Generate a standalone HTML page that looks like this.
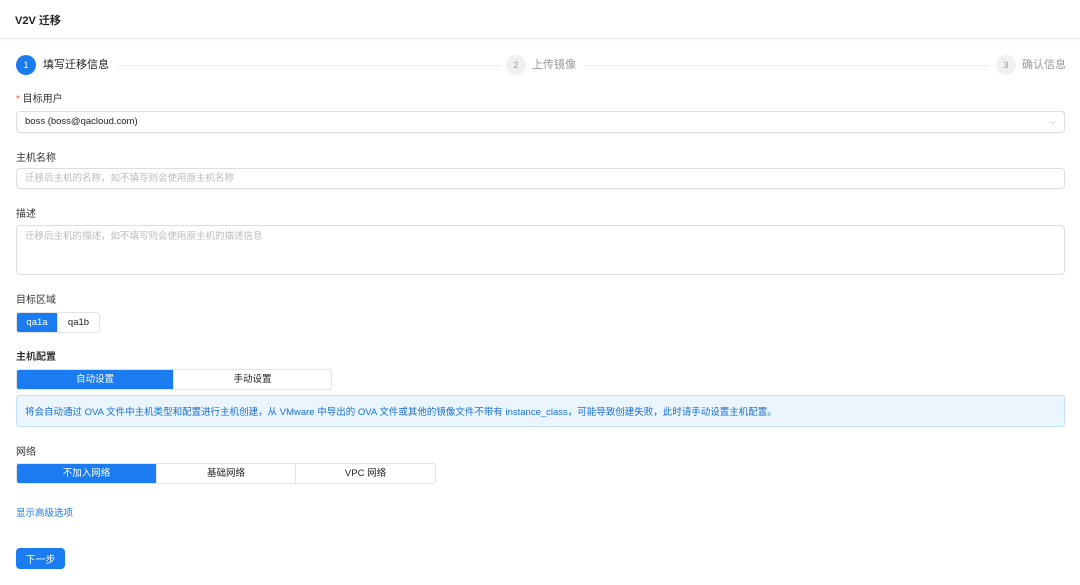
<!DOCTYPE html>
<html><head><meta charset="utf-8"><style>
*{box-sizing:border-box;margin:0;padding:0}
body{width:1080px;height:585px;background:#fff;font-family:"Liberation Sans","Noto Sans CJK SC",sans-serif;font-size:10px;color:#222;position:relative;overflow:hidden}
.a{position:absolute}
.hdr{left:0;top:0;width:1080px;height:39px;border-bottom:1px solid #eee;box-shadow:0 1px 3px rgba(0,0,0,.04)}
.lbl{font-size:10px;color:#333}
.inp{border:1px solid #ddd;border-radius:4px;background:#fff;padding-left:8px;font-size:9.5px;display:flex;align-items:center;line-height:1}
.ph{color:#bbb}
.circ{width:20px;height:20px;border-radius:50%;display:flex;align-items:center;justify-content:center;font-size:9px;line-height:1}
.seg{display:flex;border:1px solid #e3e3e3;border-radius:3px;overflow:hidden}
.seg div{display:flex;align-items:center;justify-content:center;font-size:9.5px;border-right:1px solid #e3e3e3;line-height:1;font-family:"Liberation Sans","Noto Sans CJK SC",sans-serif}
.seg .on{background:#1a7cf0;color:#fff}
</style></head><body>
<div class="a hdr"></div>
<div class="a" style="left:15px;top:12px;font-size:11px;font-weight:bold">V2V 迁移</div>

<div class="a circ" style="left:16px;top:55px;background:#1a7cf0;color:#fff">1</div>
<div class="a" style="left:43px;top:56px;font-size:11px">填写迁移信息</div>
<div class="a" style="left:117px;top:65px;width:383px;height:1px;background:#eee"></div>
<div class="a circ" style="left:506px;top:55px;background:#f0f0f0;color:#999">2</div>
<div class="a" style="left:532px;top:56px;font-size:11px;color:#999">上传镜像</div>
<div class="a" style="left:584px;top:65px;width:404px;height:1px;background:#eee"></div>
<div class="a circ" style="left:996px;top:55px;background:#f0f0f0;color:#999">3</div>
<div class="a" style="left:1022px;top:56px;font-size:11px;color:#999">确认信息</div>

<div class="a lbl" style="left:16px;top:90px"><span style="color:#e55">*</span> 目标用户</div>
<div class="a inp" style="left:16px;top:111px;width:1049px;height:22px">boss (boss@qacloud.com)<span style="position:absolute;right:8px;color:#aaa;font-size:8px">⌵</span></div>

<div class="a lbl" style="left:16px;top:149px">主机名称</div>
<div class="a inp ph" style="left:16px;top:168px;width:1049px;height:21px">迁移后主机的名称，如不填写则会使用原主机名称</div>

<div class="a lbl" style="left:16px;top:205px">描述</div>
<div class="a inp ph" style="left:16px;top:225px;width:1049px;height:50px;align-items:flex-start;padding-top:6px">迁移后主机的描述，如不填写则会使用原主机的描述信息</div>

<div class="a lbl" style="left:16px;top:291px">目标区域</div>
<div class="a seg" style="left:16px;top:312px;height:21px"><div class="on" style="width:41px">qa1a</div><div style="width:41px;border:0">qa1b</div></div>

<div class="a lbl" style="left:16px;top:348px;font-weight:bold">主机配置</div>
<div class="a seg" style="left:16px;top:369px;height:21px"><div class="on" style="width:157px">自动设置</div><div style="width:157px;border:0">手动设置</div></div>

<div class="a" style="left:16px;top:395px;width:1049px;height:32px;background:#eaf5fd;border:1px solid #bfe0f7;border-radius:3px;color:#1a6fd0;font-size:9.5px;padding:8px 0 0 8px">将会自动通过 OVA 文件中主机类型和配置进行主机创建，从 VMware 中导出的 OVA 文件或其他的镜像文件不带有 instance_class，可能导致创建失败，此时请手动设置主机配置。</div>

<div class="a lbl" style="left:16px;top:443px">网络</div>
<div class="a seg" style="left:16px;top:463px;height:21px"><div class="on" style="width:140px">不加入网络</div><div style="width:139px">基础网络</div><div style="width:139px;border:0">VPC 网络</div></div>

<div class="a" style="left:16px;top:505px;color:#1a7cf0;font-size:9.5px">显示高级选项</div>

<div class="a" style="left:16px;top:548px;width:49px;height:21px;background:#1a7cf0;border-radius:4px;color:#fff;font-size:10px;display:flex;align-items:center;justify-content:center">下一步</div>
</body></html>
